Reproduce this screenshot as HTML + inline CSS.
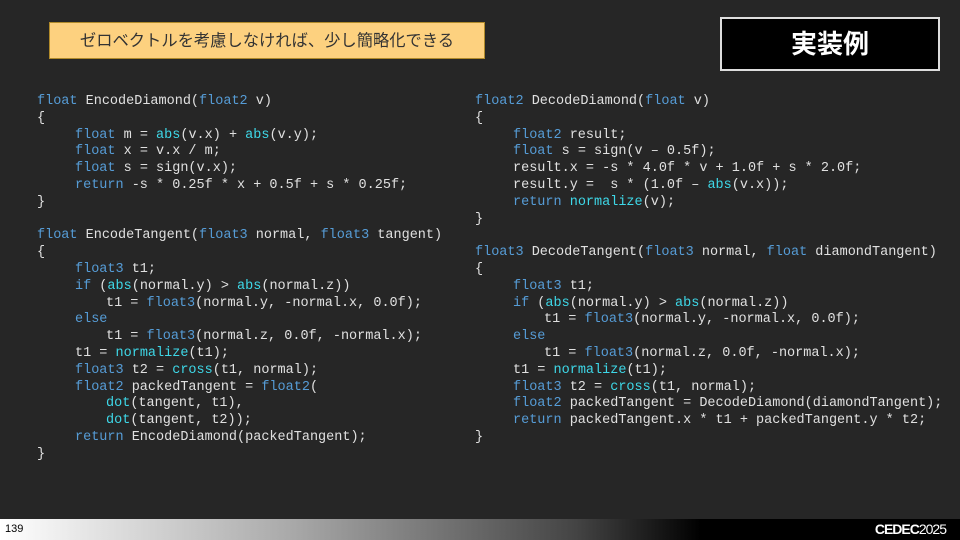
<!DOCTYPE html>
<html><head><meta charset="utf-8"><style>
html,body{margin:0;width:960px;height:540px;overflow:hidden}
body{background:#262626;position:relative;font-family:"Liberation Sans","Noto Sans CJK JP",sans-serif}
.t{position:absolute;left:49px;top:22px;width:436px;height:37px;background:#fdd17f;border:1px solid #b08a2a;box-sizing:border-box;color:#333;font-size:16.3px;text-align:center;line-height:36px}
.r{position:absolute;left:720px;top:17px;width:220px;height:54px;background:#000;border:2px solid #ddd;box-sizing:border-box;color:#fff;font-size:26px;font-weight:bold;text-align:center;line-height:50px}
.code{position:absolute;margin:0;font-family:"Liberation Mono",monospace;font-size:13.5px;line-height:16.8px;color:#e0e0e0}
.k{color:#569cd6}.f{color:#3ed8e8}
.i1{padding-left:38px}.i2{padding-left:69px}
.code div{height:16.8px;white-space:pre}
.foot{position:absolute;left:0;top:519px;width:960px;height:21px;background:linear-gradient(90deg,#fff 0%,#aaa 30%,#444 60%,#000 73%,#000 100%)}
.n{position:absolute;left:5px;top:523px;font-size:11px;color:#000}
.logo{position:absolute;right:14px;top:521px;font-size:14px;color:#fff;font-weight:bold;letter-spacing:-1px}
</style></head><body>
<div class="t">ゼロベクトルを考慮しなければ、少し簡略化できる</div>
<div class="r">実装例</div>
<div class="code" style="left:37px;top:94px"><div><span class="k">float</span> EncodeDiamond(<span class="k">float2</span> v)</div><div>{</div><div class="i1"><span class="k">float</span> m = <span class="f">abs</span>(v.x) + <span class="f">abs</span>(v.y);</div><div class="i1"><span class="k">float</span> x = v.x / m;</div><div class="i1"><span class="k">float</span> s = sign(v.x);</div><div class="i1"><span class="k">return</span> -s * 0.25f * x + 0.5f + s * 0.25f;</div><div>}</div><div> </div><div><span class="k">float</span> EncodeTangent(<span class="k">float3</span> normal, <span class="k">float3</span> tangent)</div><div>{</div><div class="i1"><span class="k">float3</span> t1;</div><div class="i1"><span class="k">if</span> (<span class="f">abs</span>(normal.y) &gt; <span class="f">abs</span>(normal.z))</div><div class="i2">t1 = <span class="k">float3</span>(normal.y, -normal.x, 0.0f);</div><div class="i1"><span class="k">else</span></div><div class="i2">t1 = <span class="k">float3</span>(normal.z, 0.0f, -normal.x);</div><div class="i1">t1 = <span class="f">normalize</span>(t1);</div><div class="i1"><span class="k">float3</span> t2 = <span class="f">cross</span>(t1, normal);</div><div class="i1"><span class="k">float2</span> packedTangent = <span class="k">float2</span>(</div><div class="i2"><span class="f">dot</span>(tangent, t1),</div><div class="i2"><span class="f">dot</span>(tangent, t2));</div><div class="i1"><span class="k">return</span> EncodeDiamond(packedTangent);</div><div>}</div></div>
<div class="code" style="left:475px;top:94px"><div><span class="k">float2</span> DecodeDiamond(<span class="k">float</span> v)</div><div>{</div><div class="i1"><span class="k">float2</span> result;</div><div class="i1"><span class="k">float</span> s = sign(v – 0.5f);</div><div class="i1">result.x = -s * 4.0f * v + 1.0f + s * 2.0f;</div><div class="i1">result.y =  s * (1.0f – <span class="f">abs</span>(v.x));</div><div class="i1"><span class="k">return</span> <span class="f">normalize</span>(v);</div><div>}</div><div> </div><div><span class="k">float3</span> DecodeTangent(<span class="k">float3</span> normal, <span class="k">float</span> diamondTangent)</div><div>{</div><div class="i1"><span class="k">float3</span> t1;</div><div class="i1"><span class="k">if</span> (<span class="f">abs</span>(normal.y) &gt; <span class="f">abs</span>(normal.z))</div><div class="i2">t1 = <span class="k">float3</span>(normal.y, -normal.x, 0.0f);</div><div class="i1"><span class="k">else</span></div><div class="i2">t1 = <span class="k">float3</span>(normal.z, 0.0f, -normal.x);</div><div class="i1">t1 = <span class="f">normalize</span>(t1);</div><div class="i1"><span class="k">float3</span> t2 = <span class="f">cross</span>(t1, normal);</div><div class="i1"><span class="k">float2</span> packedTangent = DecodeDiamond(diamondTangent);</div><div class="i1"><span class="k">return</span> packedTangent.x * t1 + packedTangent.y * t2;</div><div>}</div></div>
<div class="foot"></div>
<div class="n">139</div>
<div class="logo">CEDEC<span style="font-weight:normal">2025</span></div>
</body></html>
